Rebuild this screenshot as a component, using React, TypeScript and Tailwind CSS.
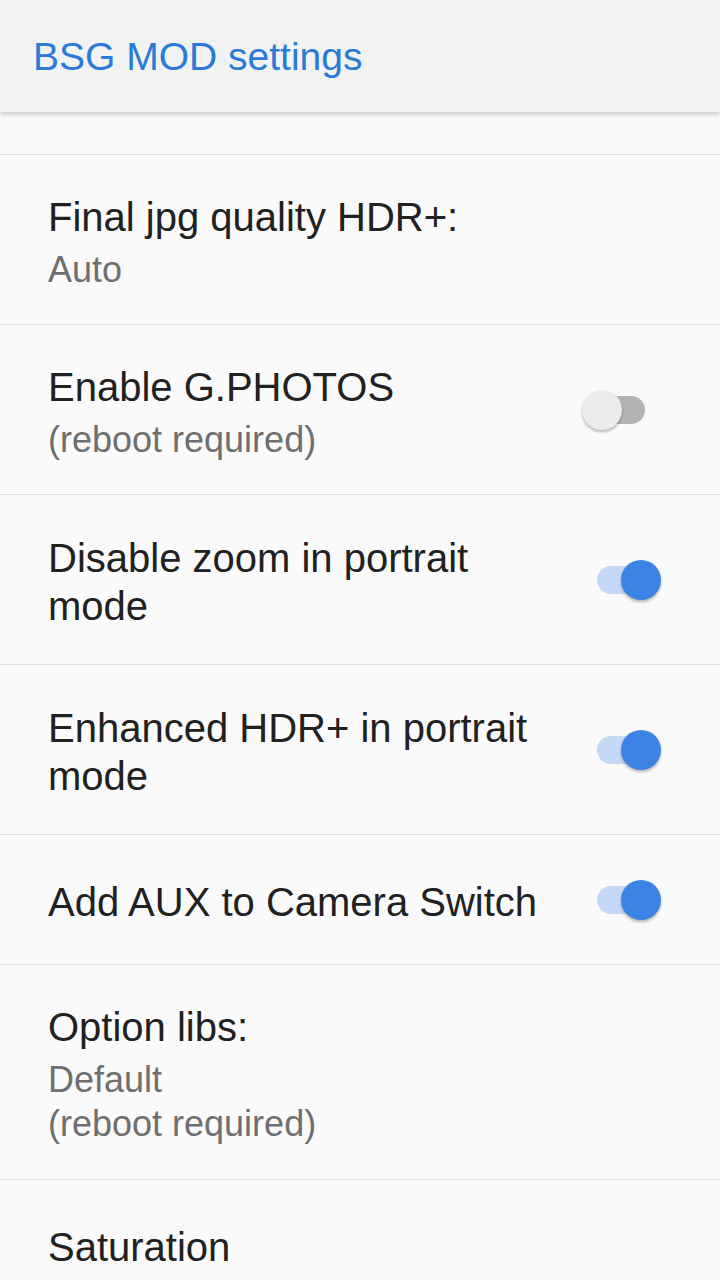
const FONT = "font-['Liberation_Sans','Roboto',sans-serif]"

type Row = {
  title: string
  lines?: string[]
  toggle?: boolean
  height: string
}

const ROWS: Row[] = [
  { title: "Final jpg quality HDR+:", lines: ["Auto"], height: "h-[170px]" },
  {
    title: "Enable G.PHOTOS",
    lines: ["(reboot required)"],
    toggle: false,
    height: "h-[170px]",
  },
  {
    title: "Disable zoom in portrait mode",
    toggle: true,
    height: "h-[170px]",
  },
  {
    title: "Enhanced HDR+ in portrait mode",
    toggle: true,
    height: "h-[170px]",
  },
  { title: "Add AUX to Camera Switch", toggle: true, height: "h-[130px]" },
  {
    title: "Option libs:",
    lines: ["Default", "(reboot required)"],
    height: "h-[215px]",
  },
  { title: "Saturation", height: "h-[130px]" },
]

export default function App() {
  return (
    <div className={`h-[1280px] w-[720px] overflow-hidden bg-[#fafafa] ${FONT}`}>
      <header className="relative z-10 flex h-[112px] items-center bg-[#f2f2f2] px-[33px] pt-[2px] shadow-[0_2px_5px_rgba(0,0,0,0.22)]">
        <h1 className="text-[39px] text-[#2a7ad8]">BSG MOD settings</h1>
      </header>
      <div className="h-[43px] border-b border-[#dcdcdc]" />
      {ROWS.map((row) => (
        <SettingRow key={row.title} row={row} />
      ))}
    </div>
  )
}

function SettingRow({ row }: { row: Row }) {
  return (
    <div
      className={`flex ${row.height} items-center border-b border-[#dcdcdc] pr-[59px] pl-[48px]`}
    >
      <div className="flex min-w-0 flex-1 flex-col pt-[5px] pr-[14px]">
        <div className="text-[40px] leading-[48px] text-[#212121]">
          {row.title}
        </div>
        {row.lines?.map((line, index) => (
          <div
            key={line}
            className={`text-[36px] leading-[44px] text-[#6f6f6f] ${
              index === 0 ? "mt-[7px]" : ""
            }`}
          >
            {line}
          </div>
        ))}
      </div>
      {row.toggle !== undefined && <Toggle on={row.toggle} />}
    </div>
  )
}

function Toggle({ on }: { on: boolean }) {
  return (
    <div className="relative h-[40px] w-[79px] shrink-0">
      <div
        className={`absolute top-[6px] left-[15px] h-[28px] w-[48px] rounded-full ${
          on ? "bg-[#c5d9f6]" : "bg-[#b4b4b4]"
        }`}
      />
      <div
        className={`absolute top-0 h-[40px] w-[40px] rounded-full shadow-[0_2px_3px_rgba(0,0,0,0.28)] ${
          on ? "right-0 bg-[#3d83e6]" : "left-0 bg-[#ececec]"
        }`}
      />
    </div>
  )
}
